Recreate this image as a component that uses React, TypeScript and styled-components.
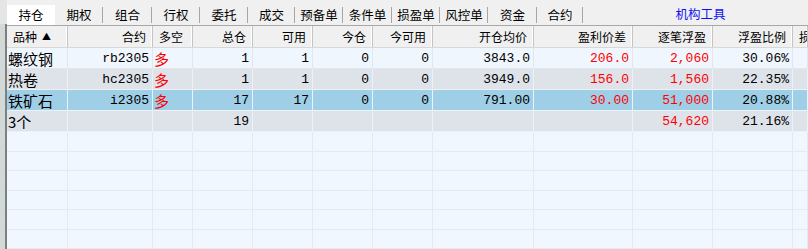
import React from 'react';
import styled, { createGlobalStyle } from 'styled-components';

const GlobalStyle = createGlobalStyle`
  html, body {
    margin: 0;
    padding: 0;
    width: 808px;
    height: 249px;
    overflow: hidden;
    background: #f0f0f0;
  }
  * { box-sizing: border-box; }
`;

type RowKind = 'plain' | 'stripe' | 'selected' | 'empty';

interface PositionRow {
  name: string;
  code: string;
  side: string;
  total: string;
  avail: string;
  today: string;
  todayAvail: string;
  openAvg: string;
  diff: string;
  profit: string;
  ratio: string;
  kind: RowKind;
}

const tabs = [
  { label: '持仓', width: 48 },
  { label: '期权', width: 48 },
  { label: '组合', width: 49 },
  { label: '行权', width: 48 },
  { label: '委托', width: 48 },
  { label: '成交', width: 47 },
  { label: '预备单', width: 48 },
  { label: '条件单', width: 49 },
  { label: '损盈单', width: 48 },
  { label: '风控单', width: 48 },
  { label: '资金', width: 49 },
  { label: '合约', width: 46 },
];

const columns = [
  { title: '品种', align: 'left', sorted: true },
  { title: '合约', align: 'right' },
  { title: '多空', align: 'left' },
  { title: '总仓', align: 'right' },
  { title: '可用', align: 'right' },
  { title: '今仓', align: 'right' },
  { title: '今可用', align: 'right' },
  { title: '开仓均价', align: 'right' },
  { title: '盈利价差', align: 'right' },
  { title: '逐笔浮盈', align: 'right' },
  { title: '浮盈比例', align: 'right' },
  { title: '损益', align: 'left' },
];

const rows: PositionRow[] = [
  { name: '螺纹钢', code: 'rb2305', side: '多', total: '1', avail: '1', today: '0', todayAvail: '0', openAvg: '3843.0', diff: '206.0', profit: '2,060', ratio: '30.06%', kind: 'plain' },
  { name: '热卷', code: 'hc2305', side: '多', total: '1', avail: '1', today: '0', todayAvail: '0', openAvg: '3949.0', diff: '156.0', profit: '1,560', ratio: '22.35%', kind: 'stripe' },
  { name: '铁矿石', code: 'i2305', side: '多', total: '17', avail: '17', today: '0', todayAvail: '0', openAvg: '791.00', diff: '30.00', profit: '51,000', ratio: '20.88%', kind: 'selected' },
  { name: '3个', code: '', side: '', total: '19', avail: '', today: '', todayAvail: '', openAvg: '', diff: '', profit: '54,620', ratio: '21.16%', kind: 'stripe' },
];

const GRID = '61px 85px 40px 60px 60px 60px 60px 101px 99px 80px 80px 1fr';

const rowBg: Record<RowKind, string> = {
  plain: '#f0f6fd',
  stripe: '#dee3ea',
  selected: '#9fcee7',
  empty: '#f0f7fe',
};

const rowLine: Record<RowKind, string> = {
  plain: '#e3e7ec',
  stripe: '#eef0f3',
  selected: '#e8f3fa',
  empty: '#e6e9ee',
};

const Page = styled.div`
  display: flex;
  width: 808px;
  height: 249px;
  overflow: hidden;
  font-family: "Noto Sans CJK SC", "Liberation Sans", sans-serif;
`;

const LeftStrip = styled.div`
  flex: 0 0 7px;
  display: flex;
  flex-direction: column;
  background: #d3d9d7;
`;

const StripTop = styled.div`
  height: 24px;
  background: #e4e6e6;
`;

const StripLine = styled.div`
  flex: 1;
  margin-left: 5px;
  background: #7d8080;
`;

const Main = styled.div`
  flex: 1;
  display: flex;
  flex-direction: column;
  min-width: 0;
`;

const TabBar = styled.div`
  height: 26px;
  display: flex;
  align-items: flex-end;
  background: #f0f0f0;
  border-bottom: 1px solid #a8a8a8;
`;

const Tab = styled.div<{ $active?: boolean; $w: number }>`
  width: ${p => p.$w}px;
  height: 20px;
  display: flex;
  align-items: center;
  justify-content: center;
  font-size: 12.5px;
  color: #000;
  background: ${p => (p.$active ? '#ffffff' : 'transparent')};
  position: relative;
  padding-bottom: 1px;
  &::after {
    content: '';
    position: absolute;
    right: 0;
    top: 2px;
    bottom: 2px;
    width: 1px;
    background: ${p => (p.$active ? 'transparent' : '#a6a6a6')};
  }
`;

const ToolLink = styled.div`
  flex: 1;
  height: 20px;
  display: flex;
  align-items: center;
  justify-content: center;
  padding-left: 10px;
  padding-bottom: 3px;
  font-size: 12.5px;
  color: #1010f0;
`;

const Table = styled.div`
  flex: 1;
  display: flex;
  flex-direction: column;
  background: #f0f7fe;
  overflow: hidden;
`;

const HeaderRow = styled.div`
  display: grid;
  grid-template-columns: ${GRID};
  height: 24px;
  background: #f0f0f0;
  border-bottom: 1px solid #d8d8d8;
`;

const HeaderCell = styled.div<{ $align: string }>`
  display: flex;
  align-items: center;
  justify-content: ${p => (p.$align === 'right' ? 'flex-end' : 'flex-start')};
  padding: 0 6px 0 6px;
  font-size: 12px;
  color: #000;
  white-space: nowrap;
  overflow: hidden;
  border-right: 1px solid #c4c4c4;
  box-shadow: inset -1px 0 0 #ffffff;
`;

const SortMark = styled.span`
  font-size: 9px;
  margin-left: 5px;
  line-height: 1;
`;

const DataRow = styled.div<{ $kind: RowKind }>`
  display: grid;
  grid-template-columns: ${GRID};
  height: 21px;
  background: ${p => rowBg[p.$kind]};
  border-bottom: 1px solid ${p => rowLine[p.$kind]};
`;

const Cell = styled.div<{ $kind: RowKind; $align?: 'left' | 'right'; $red?: boolean; $cjk?: boolean }>`
  display: flex;
  align-items: center;
  justify-content: ${p => (p.$align === 'left' ? 'flex-start' : 'flex-end')};
  padding: 0 3px 0 ${p => (p.$cjk ? '1px' : '3px')};
  border-right: 1px solid ${p => rowLine[p.$kind]};
  font-family: ${p => (p.$cjk ? '"Noto Sans CJK SC", sans-serif' : '"Liberation Mono", "Noto Sans CJK SC", monospace')};
  font-size: ${p => (p.$cjk ? '15px' : '13px')};
  color: ${p => (p.$red ? '#ff0000' : '#000')};
  white-space: nowrap;
  overflow: hidden;
`;

const EmptyRows = 6;

export default function App() {
  return (
    <>
      <GlobalStyle />
      <Page>
        <LeftStrip>
          <StripTop />
          <StripLine />
        </LeftStrip>
        <Main>
          <TabBar>
            {tabs.map((t, i) => (
              <Tab key={t.label + i} $w={t.width} $active={i === 0}>{t.label}</Tab>
            ))}
            <ToolLink>机构工具</ToolLink>
          </TabBar>
          <Table>
            <HeaderRow>
              {columns.map(c => (
                <HeaderCell key={c.title} $align={c.align}>
                  {c.title}
                  {c.sorted && <SortMark>▲</SortMark>}
                </HeaderCell>
              ))}
            </HeaderRow>
            {rows.map((r, i) => (
              <DataRow key={i} $kind={r.kind}>
                <Cell $kind={r.kind} $align="left" $cjk>{r.name}</Cell>
                <Cell $kind={r.kind}>{r.code}</Cell>
                <Cell $kind={r.kind} $align="left" $cjk $red>{r.side}</Cell>
                <Cell $kind={r.kind}>{r.total}</Cell>
                <Cell $kind={r.kind}>{r.avail}</Cell>
                <Cell $kind={r.kind}>{r.today}</Cell>
                <Cell $kind={r.kind}>{r.todayAvail}</Cell>
                <Cell $kind={r.kind}>{r.openAvg}</Cell>
                <Cell $kind={r.kind} $red>{r.diff}</Cell>
                <Cell $kind={r.kind} $red>{r.profit}</Cell>
                <Cell $kind={r.kind}>{r.ratio}</Cell>
                <Cell $kind={r.kind} />
              </DataRow>
            ))}
            {Array.from({ length: EmptyRows }).map((_, i) => (
              <DataRow key={'e' + i} $kind="empty">
                {columns.map(c => (
                  <Cell key={c.title} $kind="empty" />
                ))}
              </DataRow>
            ))}
          </Table>
        </Main>
      </Page>
    </>
  );
}
